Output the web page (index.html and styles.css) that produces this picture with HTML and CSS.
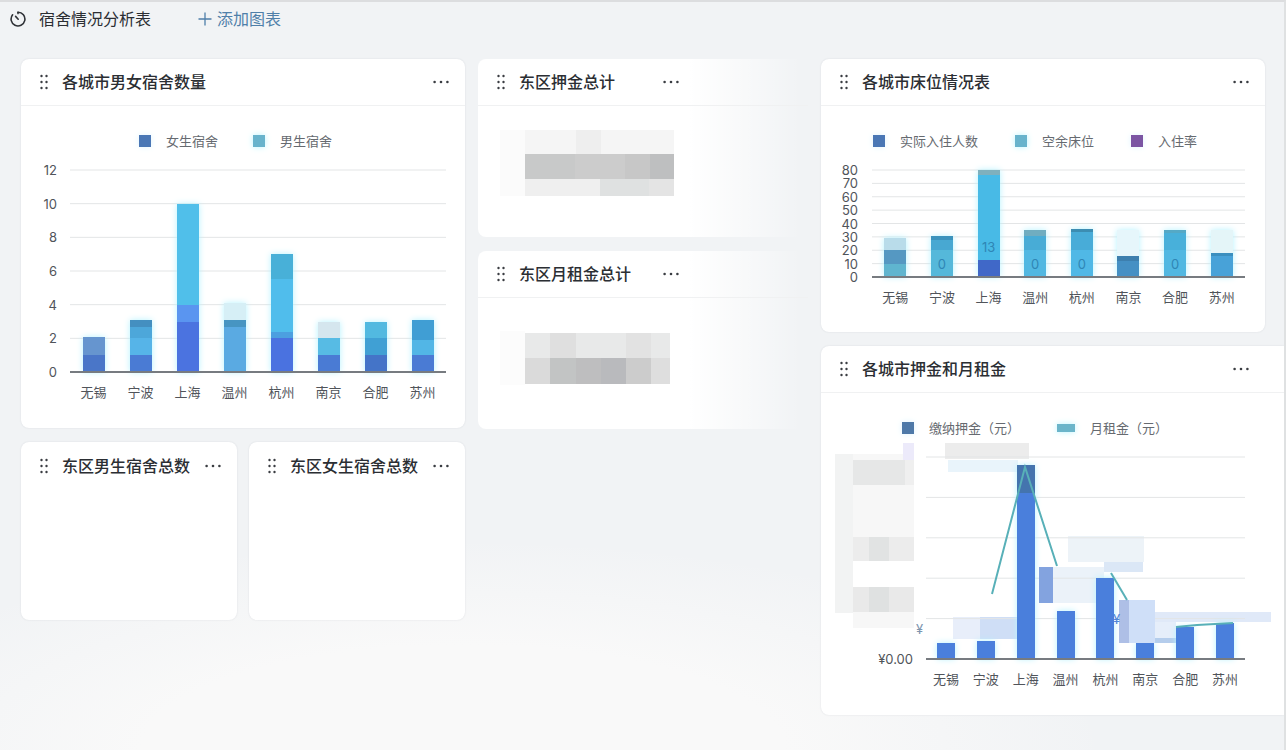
FILE: index.html
```html
<!DOCTYPE html>
<html lang="zh-CN">
<head>
    <meta charset="UTF-8">
    <meta name="viewport" content="width=device-width, initial-scale=1.0">
    <title>宿舍情况分析表</title>
    <link rel="stylesheet" href="styles.css">
</head>
<body>
    <svg class="defs" aria-hidden="true">
        <symbol id="grip" viewBox="0 0 8 16">
            <circle cx="1.5" cy="2" r="1.2"/><circle cx="6.5" cy="2" r="1.2"/>
            <circle cx="1.5" cy="8" r="1.2"/><circle cx="6.5" cy="8" r="1.2"/>
            <circle cx="1.5" cy="14" r="1.2"/><circle cx="6.5" cy="14" r="1.2"/>
        </symbol>
        <symbol id="dots" viewBox="0 0 16 4">
            <circle cx="1.6" cy="2" r="1.3"/><circle cx="8" cy="2" r="1.3"/><circle cx="14.4" cy="2" r="1.3"/>
        </symbol>
    </svg>

    <header class="topbar">
        <svg class="logo" viewBox="0 0 16 16">
            <path d="M8 1.2 A6.9 6.9 0 1 1 2.6 3.8"/>
            <path d="M5.6 5.4 L8.2 8.2"/>
            <path d="M8 1.2 V2.6"/>
        </svg>
        <h1>宿舍情况分析表</h1>
        <button class="addBtn">
            <svg viewBox="0 0 14 14"><path d="M7 0.5 V13.5 M0.5 7 H13.5"/></svg>
            添加图表
        </button>
    </header>

    <main class="board">
        <div class="column">
            <section class="card">
                <div class="cardHead">
                    <svg class="grip"><use href="#grip"/></svg>
                    <h2>各城市男女宿舍数量</h2>
                    <button class="menuBtn" aria-label="更多"><svg><use href="#dots"/></svg></button>
                </div>
                <div class="legend legendRooms">
                    <span class="key blue">女生宿舍</span>
                    <span class="key cyan">男生宿舍</span>
                </div>
                <svg class="chart" id="roomsChart" viewBox="0 0 444 272"></svg>
            </section>
            <div class="pair">
                <section class="card cardPlain">
                    <div class="cardHead">
                        <svg class="grip"><use href="#grip"/></svg>
                        <h2>东区男生宿舍总数</h2>
                        <button class="menuBtn" aria-label="更多"><svg><use href="#dots"/></svg></button>
                    </div>
                </section>
                <section class="card cardPlain">
                    <div class="cardHead">
                        <svg class="grip"><use href="#grip"/></svg>
                        <h2>东区女生宿舍总数</h2>
                        <button class="menuBtn" aria-label="更多"><svg><use href="#dots"/></svg></button>
                    </div>
                </section>
            </div>
        </div>

        <div class="column">
            <section class="card cardFade">
                <div class="cardHead">
                    <svg class="grip"><use href="#grip"/></svg>
                    <h2>东区押金总计</h2>
                    <button class="menuBtn" aria-label="更多"><svg><use href="#dots"/></svg></button>
                </div>
                <svg class="mosaic" viewBox="0 0 174 66">
                    <rect width="25" height="66" fill="#fbfbfb"/>
                    <rect x="25" width="149" height="25" fill="#f5f5f5"/>
                    <rect x="76" width="25" height="25" fill="#eeeeee"/>
                    <rect x="25" y="24" width="149" height="25" fill="#cccccc"/>
                    <rect x="25" y="24" width="50" height="25" fill="#c8c9c9"/>
                    <rect x="125" y="24" width="25" height="25" fill="#c7c7c7"/>
                    <rect x="150" y="24" width="24" height="25" fill="#bebfc0"/>
                    <rect x="25" y="49" width="149" height="17" fill="#efefef"/>
                    <rect x="100" y="49" width="49" height="17" fill="#dfe1e1"/>
                    <rect x="149" y="49" width="25" height="17" fill="#e4e4e4"/>
                </svg>
            </section>
            <section class="card cardFade">
                <div class="cardHead">
                    <svg class="grip"><use href="#grip"/></svg>
                    <h2>东区月租金总计</h2>
                    <button class="menuBtn" aria-label="更多"><svg><use href="#dots"/></svg></button>
                </div>
                <svg class="mosaic" viewBox="0 0 174 66">
                    <rect y="9" width="25" height="54" fill="#fcfcfc"/>
                    <rect x="25" y="11" width="145" height="26" fill="#e8e9e9"/>
                    <rect x="50" y="11" width="26" height="26" fill="#dfdfdf"/>
                    <rect x="126" y="11" width="25" height="26" fill="#e2e2e2"/>
                    <rect x="25" y="36" width="145" height="26" fill="#dadada"/>
                    <rect x="50" y="36" width="26" height="26" fill="#c2c4c4"/>
                    <rect x="76" y="36" width="25" height="26" fill="#bebebf"/>
                    <rect x="101" y="36" width="25" height="26" fill="#b9babd"/>
                    <rect x="126" y="36" width="25" height="26" fill="#cccccc"/>
                    <rect x="151" y="36" width="19" height="26" fill="#dedede"/>
                </svg>
            </section>
        </div>

        <div class="column">
            <section class="card">
                <div class="cardHead">
                    <svg class="grip"><use href="#grip"/></svg>
                    <h2>各城市床位情况表</h2>
                    <button class="menuBtn" aria-label="更多"><svg><use href="#dots"/></svg></button>
                </div>
                <div class="legend legendBeds">
                    <span class="key blue">实际入住人数</span>
                    <span class="key cyan">空余床位</span>
                    <span class="key purple">入住率</span>
                </div>
                <svg class="chart" id="bedsChart" viewBox="0 0 444 176"></svg>
            </section>
            <section class="card cardWide">
                <div class="cardHead">
                    <svg class="grip"><use href="#grip"/></svg>
                    <h2>各城市押金和月租金</h2>
                    <button class="menuBtn" aria-label="更多"><svg><use href="#dots"/></svg></button>
                </div>
                <div class="legend legendRent">
                    <span class="key steel">缴纳押金（元）</span>
                    <span class="key line">月租金（元）</span>
                </div>
                <svg class="chart" id="rentChart" viewBox="0 0 463 272"></svg>
            </section>
        </div>
    </main>

    <script src="charts.js"></script>
</body>
</html>
```

FILE: styles.css
```css
* { box-sizing: border-box; }
body { margin: 0; min-height: 100vh; font-family: Inter, "Noto Sans CJK SC", sans-serif; color: #2b2e33; background: radial-gradient(ellipse 50% 28% at 36% 100%, #f9f9f9 50%, rgba(249, 249, 249, 0)) #f1f3f5; border-top: 2px solid #dcdddf; border-right: 2px solid #dfe1e2; }
h1, h2 { margin: 0; font-size: 16px; line-height: 24px; white-space: nowrap; }
h1 { font-weight: 400; }
h2 { font-weight: 500; }
button { padding: 0; border: none; background: none; font-family: inherit; cursor: pointer; }
.defs { position: absolute; width: 0; height: 0; }

.topbar { display: flex; align-items: center; height: 34px; padding-left: 10px; }
.logo { width: 16px; height: 16px; margin-right: 13px; fill: none; stroke: #2f3237; stroke-width: 1.6; stroke-linecap: round; }
.addBtn { display: flex; align-items: center; gap: 5px; margin-left: 47px; font-size: 16px; line-height: 24px; color: #4f7fa9; }
.addBtn svg { width: 14px; height: 14px; stroke: #4f7fa9; stroke-width: 1.3; }

.board { display: grid; grid-template-columns: 444fr 330fr 444fr; gap: 13px; align-items: start; padding: 23px 19px 34px 21px; }
.column { display: grid; gap: 14px; min-width: 0; }
.pair { display: grid; grid-template-columns: 1fr 1fr; gap: 12px; }

.card { min-width: 0; background: #fff; border-radius: 8px; box-shadow: 0 0 2px rgba(40, 50, 70, 0.12); }
.cardHead { display: flex; align-items: center; height: 47px; padding: 0 16px 0 19px; border-bottom: 1px solid #f0f1f2; }
.grip { width: 8px; height: 16px; margin-right: 14px; fill: #3a3d42; flex: none; }
.menuBtn { display: flex; margin-left: auto; }
.menuBtn svg { width: 16px; height: 4px; fill: #3a3d42; }
.cardPlain { min-height: 178px; }
.cardPlain .cardHead { border-bottom: none; }
.cardFade { min-height: 178px; background: linear-gradient(to right, #fff 64%, rgba(255, 255, 255, 0.4) 85%, rgba(255, 255, 255, 0) 98%); box-shadow: none; }
.cardFade .cardHead { padding-right: 39%; }
.cardWide { margin-right: -19px; border-radius: 8px 0 0 8px; }
.cardWide .cardHead { padding-right: 35px; }
.mosaic { display: block; width: 174px; height: 66px; margin: 24px 0 0 22px; }

.legend { display: flex; align-items: center; height: 30px; margin-top: 20px; font-size: 13px; line-height: 20px; color: #666a70; white-space: nowrap; }
.legendRooms { padding-left: 118px; gap: 35px; }
.legendBeds { padding-left: 52px; gap: 37px; }
.legendRent { padding-left: 81px; gap: 37px; }
.key { display: flex; align-items: center; gap: 15px; }
.key::before { content: ""; width: 12px; height: 12px; background: #4a77b5; box-shadow: 0 0 6px #dff4fd; }
.cyan::before { background: #68b3cc; box-shadow: 0 0 6px #b8f4ff; }
.purple::before { background: #7b55a3; }
.steel::before { background: #4f79a8; }
.line::before { width: 18px; height: 8px; background: #6bb5ca; box-shadow: 0 0 6px #b8f4ff; }

.chart { display: block; width: 100%; height: auto; font-size: 13px; fill: #50545a; }
.chart .grid { stroke: #e3e5e6; stroke-width: 1; }
.chart .axis { stroke: #777b80; stroke-width: 2; }
.chart .tick { text-anchor: end; }
.chart .city, .chart .value { text-anchor: middle; }
.chart .value { fill: #2f86b5; }
.chart .bars { shape-rendering: crispEdges; filter: drop-shadow(0 0 3px #b5f3ff); }
.chart .trend { fill: none; stroke: #58b0b8; stroke-width: 2; }
```

FILE: charts.js
```js
const cities = ['无锡', '宁波', '上海', '温州', '杭州', '南京', '合肥', '苏州'];

// each bar is a stack of [top value, colour], from the bottom up
const rooms = [
    [[1, '#4a76c8'], [2.1, '#6695cf']],
    [[1, '#4a7bd4'], [2, '#56b4e8'], [2.7, '#4da7da'], [3.1, '#448fc0']],
    [[3, '#4b73e0'], [4, '#5a95f0'], [10, '#50bfea']],
    [[2.7, '#5aaae2'], [3.1, '#4795c2'], [4.1, '#d6eff6']],
    [[2, '#4a72e0'], [2.4, '#4c9fe0'], [5.5, '#50bdec'], [7, '#48b0d8']],
    [[1, '#4a7bd4'], [2, '#57bbe4'], [3, '#d5e6ee']],
    [[1, '#4474c8'], [2, '#40a0d4'], [3, '#52b9e0']],
    [[1, '#4a7bd4'], [1.9, '#52b6e6'], [3.1, '#409ed4']]
];

const beds = [
    [[10, '#5fb5cf'], [20, '#5598c2'], [29, '#b9dcea']],
    [[20, '#55b8da'], [28, '#48a8d2'], [31, '#3b93bd']],
    [[13, '#4068c8'], [76, '#48bae6'], [80, '#7fb0bd']],
    [[20, '#50b8e2'], [31, '#48acd6'], [35, '#70adc0']],
    [[20, '#50b8e6'], [34, '#48acd8'], [36, '#3c8db2']],
    [[12, '#4590c4'], [16, '#3d7fae'], [35, '#e6f6fb']],
    [[20, '#50b8e2'], [33, '#48b0da'], [35, '#55a9c6']],
    [[16, '#48a2d8'], [18, '#3b8fbf'], [35, '#e4f5f8']]
];

// share of the plot height, the money values are masked
const deposits = [8, 9, 96, 24, 40, 8, 16, 18].map(v => [[v, '#4a7fdc']]);
deposits[2] = [[82, '#4a7fdc'], [96, '#4474ae']];

function drawChart(id, opt) {
    const { left, right, top, bottom, max, step, barWidth, stacks } = opt;
    const y = v => bottom - v / max * (bottom - top);
    const slot = (right - left) / cities.length;
    let out = opt.under || '';

    for (let v = 0; v <= max; v += step) {
        if (v > 0) out += `<line class="grid" x1="${left}" x2="${right}" y1="${y(v)}" y2="${y(v)}"/>`;
        if (opt.tick(v)) out += `<text class="tick" x="${opt.tickX}" y="${y(v) + 5}">${opt.tick(v)}</text>`;
    }

    out += '<g class="bars">';
    stacks.forEach((stack, i) => {
        const x = left + slot * (i + 0.5) - barWidth / 2;
        let from = 0;
        stack.forEach(([to, color]) => {
            out += `<rect x="${x}" y="${y(to)}" width="${barWidth}" height="${y(from) - y(to)}" fill="${color}"/>`;
            from = to;
        });
    });
    out += '</g>';
    out += `<line class="axis" x1="${left}" x2="${right}" y1="${bottom}" y2="${bottom}"/>`;

    cities.forEach((city, i) => {
        const x = left + slot * (i + 0.5);
        out += `<text class="city" x="${x}" y="${bottom + 25}">${city}</text>`;
        const label = opt.values && opt.values[i];
        if (label) out += `<text class="value" x="${x}" y="${y(label[1])}">${label[0]}</text>`;
    });

    document.getElementById(id).innerHTML = out + (opt.over || '');
}

drawChart('roomsChart', {
    left: 49, right: 425, top: 14, bottom: 216, max: 12, step: 2,
    barWidth: 22, stacks: rooms, tickX: 36, tick: v => String(v)
});

drawChart('bedsChart', {
    left: 51, right: 424, top: 14, bottom: 121, max: 80, step: 10,
    barWidth: 22, stacks: beds, tickX: 37, tick: v => String(v),
    values: [null, ['0', 6], ['13', 19], ['0', 6], ['0', 6], null, ['0', 6], null]
});

drawChart('rentChart', {
    left: 105, right: 424, top: 14, bottom: 216, max: 100, step: 20,
    barWidth: 18, stacks: deposits, tickX: 92, tick: v => v === 0 ? '¥0.00' : '',
    under: `
        <rect x="14" y="11" width="18" height="159" fill="#f2f3f3"/>
        <rect x="32" y="11" width="61" height="174" fill="#f7f7f7"/>
        <rect x="32" y="17" width="52" height="25" fill="#e6e7e7"/>
        <rect x="84" y="17" width="9" height="25" fill="#efefef"/>
        <rect x="32" y="94" width="61" height="24" fill="#ececec"/>
        <rect x="48" y="94" width="20" height="24" fill="#e1e3e3"/>
        <rect x="32" y="118" width="61" height="26" fill="#ffffff"/>
        <rect x="32" y="144" width="61" height="25" fill="#e9e9e9"/>
        <rect x="48" y="144" width="20" height="25" fill="#dfe1e1"/>
        <rect x="82" y="0" width="11" height="17" fill="#eceafa"/>
        <rect x="124" y="0" width="84" height="16" fill="#ececec"/>
        <rect x="127" y="17" width="70" height="12" fill="#e9f4fb"/>
        <rect x="247" y="93" width="76" height="26" fill="#edf3f8"/>
        <rect x="283" y="119" width="39" height="10" fill="#dbe7f6"/>
        <rect x="232" y="124" width="51" height="36" fill="#ebf2f9"/>
        <rect x="334" y="169" width="116" height="10" fill="#e0e9f8"/>
        <rect x="334" y="179" width="21" height="16" fill="#e6eefa"/>
        <rect x="132" y="174" width="27" height="22" fill="#e8eefa"/>
        <rect x="159" y="174" width="37" height="22" fill="#cfdef6"/>
        <rect x="334" y="195" width="22" height="5" fill="#b5cdec"/>`,
    over: `
        <rect x="218" y="124" width="14" height="36" fill="#83a3df"/>
        <rect x="298" y="157" width="36" height="43" fill="#cfdff8"/>
        <rect x="298" y="157" width="10" height="43" fill="#aebfe6"/>
        <polyline class="trend" points="171,151 204,24 236,123"/>
        <polyline class="trend" points="290,130 306,157"/>
        <polyline class="trend" points="355,184 376,182 412,180"/>
        <text x="95" y="191" fill="#7d95ae">¥</text>
        <text x="292" y="181" fill="#4f86d8">¥</text>`
});
```
